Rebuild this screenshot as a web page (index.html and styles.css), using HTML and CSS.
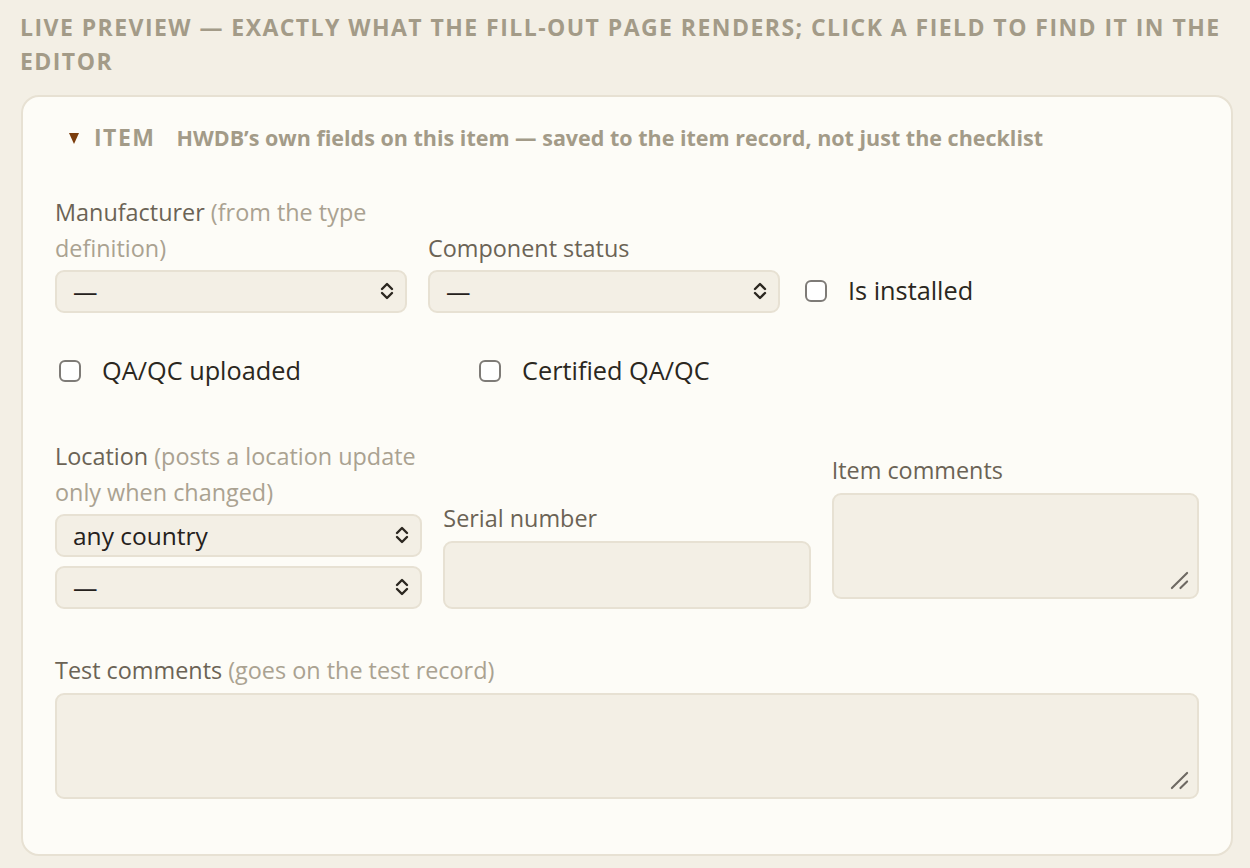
FILE: index.html
```html
<!DOCTYPE html>
<html>
<head lang="en">
    <meta charset="UTF-8">
    <title>Live preview</title>
    <link rel="stylesheet" href="styles.css">
</head>
<body>

<h2 class="preview-title">Live preview — exactly what the fill-out page renders; click a field to find it in the editor</h2>

<section class="card">
    <div class="summary">
        <span class="caret"></span>
        <span class="summary-name">Item</span>
        <span class="summary-note">HWDB’s own fields on this item — saved to the item record, not just the checklist</span>
    </div>

    <div class="row row-top">
        <div class="field narrow">
            <label>Manufacturer <span class="hint">(from the type definition)</span></label>
            <div class="select-wrap">
                <select><option>—</option></select>
                <svg class="chev" viewBox="0 0 16 22"><path d="M3 9 L8 4 L13 9 M3 13 L8 18 L13 13"/></svg>
            </div>
        </div>
        <div class="field narrow">
            <label>Component status</label>
            <div class="select-wrap">
                <select><option>—</option></select>
                <svg class="chev" viewBox="0 0 16 22"><path d="M3 9 L8 4 L13 9 M3 13 L8 18 L13 13"/></svg>
            </div>
        </div>
        <label class="check wide"><input type="checkbox"> Is installed</label>
    </div>

    <div class="row row-checks">
        <label class="check wide"><input type="checkbox"> QA/QC uploaded</label>
        <label class="check wide"><input type="checkbox"> Certified QA/QC</label>
    </div>

    <div class="row row-three">
        <div class="field">
            <label>Location <span class="hint">(posts a location update only when changed)</span></label>
            <div class="select-wrap">
                <select><option>any country</option></select>
                <svg class="chev" viewBox="0 0 16 22"><path d="M3 9 L8 4 L13 9 M3 13 L8 18 L13 13"/></svg>
            </div>
            <div class="select-wrap stacked">
                <select><option>—</option></select>
                <svg class="chev" viewBox="0 0 16 22"><path d="M3 9 L8 4 L13 9 M3 13 L8 18 L13 13"/></svg>
            </div>
        </div>
        <div class="field">
            <label>Serial number</label>
            <input type="text" class="text-input">
        </div>
        <div class="field">
            <label>Item comments</label>
            <div class="area-wrap short">
                <textarea class="comments"></textarea>
                <svg class="grip" viewBox="0 0 20 20"><path d="M2 18 L18 2 M11 18 L18 11"/></svg>
            </div>
        </div>
    </div>

    <div class="field full">
        <label>Test comments <span class="hint">(goes on the test record)</span></label>
        <div class="area-wrap">
            <textarea class="comments"></textarea>
            <svg class="grip" viewBox="0 0 20 20"><path d="M2 18 L18 2 M11 18 L18 11"/></svg>
        </div>
    </div>
</section>

</body>
</html>
```

FILE: styles.css
```css
* {
    box-sizing: border-box;
}
body {
    margin: 0;
    padding: 10px 17px 13px 21px;
    background-color: #f3efe5;
    font-family: "Open Sans", "Liberation Sans", sans-serif;
    color: #6b6355;
}
.preview-title {
    margin: 0 0 17px -1px;
    font-size: 23px;
    line-height: 34px;
    font-weight: 700;
    letter-spacing: 1.45px;
    text-transform: uppercase;
    color: #a39b88;
}
.card {
    background-color: #fdfcf7;
    border: 2px solid #e7e1d3;
    border-radius: 18px;
    padding: 25px 32px 55px 32px;
}
.summary {
    display: flex;
    align-items: center;
    height: 30px;
    padding-left: 13px;
    font-weight: 700;
    color: #a39b88;
}
.caret {
    width: 0;
    height: 0;
    border-left: 5.5px solid transparent;
    border-right: 5.5px solid transparent;
    border-top: 11px solid #7b3d0c;
    margin: 3px 15px 0 1px;
}
.summary-name {
    font-size: 23px;
    letter-spacing: 1.5px;
    text-transform: uppercase;
    margin-right: 21px;
}
.summary-note {
    font-size: 21.5px;
}

/* rows */
.row {
    display: flex;
    gap: 21px;
    align-items: flex-end;
}
.row-top {
    margin-top: 42px;
}
.row-checks {
    margin-top: 37px;
}
.row-three {
    margin-top: 45px;
}
.field {
    flex: 1 1 0;
    min-width: 0;
}
.field.narrow {
    flex: 0 0 352px;
}
.check.wide {
    flex: 0 0 399px;
}
.field.full {
    margin-top: 43px;
}
.field label {
    display: block;
    font-size: 23.4px;
    line-height: 36px;
    color: #6b6355;
}
.hint {
    color: #aaa291;
}

/* select */
.select-wrap {
    position: relative;
    margin-top: 4px;
}
.select-wrap.stacked {
    margin-top: 9px;
}
select {
    appearance: none;
    -webkit-appearance: none;
    display: block;
    width: 100%;
    height: 43px;
    padding: 0 40px 0 16px;
    font-family: inherit;
    font-size: 24.5px;
    color: #25211c;
    background-color: #f3efe5;
    border: 2px solid #e7e1d3;
    border-radius: 9px;
}
.chev {
    position: absolute;
    right: 12px;
    top: 10px;
    width: 16px;
    height: 22px;
    fill: none;
    stroke: #2b2720;
    stroke-width: 2.4;
    stroke-linecap: round;
    stroke-linejoin: round;
}
.text-input {
    display: block;
    width: 100%;
    height: 68px;
    margin-top: 5px;
    background-color: #f3efe5;
    border: 2px solid #e7e1d3;
    border-radius: 9px;
}

/* textareas */
.area-wrap {
    position: relative;
    margin-top: 5px;
}
.area-wrap.short {
    margin-bottom: 10px;
}
.comments {
    display: block;
    width: 100%;
    height: 106px;
    resize: none;
    background-color: #f3efe5;
    border: 2px solid #e7e1d3;
    border-radius: 9px;
}
.grip {
    position: absolute;
    right: 10px;
    bottom: 9px;
    width: 19px;
    height: 19px;
    fill: none;
    stroke: #6e6963;
    stroke-width: 2.2;
    stroke-linecap: round;
}

/* checkbox */
.check {
    display: flex;
    align-items: center;
    height: 43px;
    padding-bottom: 4px;
    font-size: 25.3px;
    color: #2b2720;
}
.check input {
    appearance: none;
    -webkit-appearance: none;
    width: 22px;
    height: 22px;
    margin: 3px 21px 0 4px;
    background-color: #fff;
    border: 2.4px solid #7e7b77;
    border-radius: 6px;
}
```
